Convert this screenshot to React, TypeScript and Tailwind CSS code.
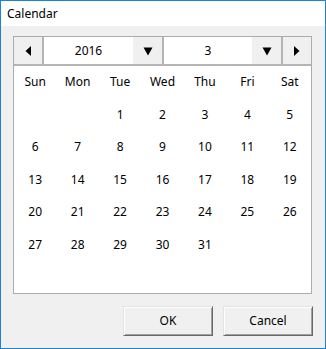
const rows: (number | null)[][] = [
  [null, null, 1, 2, 3, 4, 5],
  [6, 7, 8, 9, 10, 11, 12],
  [13, 14, 15, 16, 17, 18, 19],
  [20, 21, 22, 23, 24, 25, 26],
  [27, 28, 29, 30, 31, null, null],
]

const dayNames = ["Sun", "Mon", "Tue", "Wed", "Thu", "Fri", "Sat"]

const DownArrow = () => (
  <svg width="10" height="10" viewBox="0 0 10 10">
    <path d="M0.5 1.5 H9.5 L5 9.5 Z" fill="#000" />
  </svg>
)

const SideArrow = ({ dir }: { dir: "left" | "right" }) => (
  <svg width="6" height="10" viewBox="0 0 6 10">
    {dir === "left" ? (
      <path d="M6 0 V10 L0.5 5 Z" fill="#000" />
    ) : (
      <path d="M0 0 V10 L5.5 5 Z" fill="#000" />
    )}
  </svg>
)

const Sep = () => <div className="w-[2px] bg-[#b4b4b4]" />

const DialogButton = ({ label }: { label: string }) => (
  <button className="flex h-[30px] w-[90px] items-center justify-center border border-t-[#e3e3e3] border-l-[#e3e3e3] border-r-[#696969] border-b-[#696969] bg-[#f0f0f0] text-[12px] text-black shadow-[inset_1px_1px_0_#ffffff,inset_-1px_-1px_0_#a0a0a0]">
    {label}
  </button>
)

export default function App() {
  return (
    <div
      className="flex h-[349px] w-[326px] flex-col border border-[#1883d7] bg-[#f0f0f0] text-black"
      style={{ fontFamily: '"Noto Sans", "Open Sans", sans-serif' }}
    >
      <div className="flex h-[25px] items-center bg-white pl-[6px] text-[12px]">
        Calendar
      </div>
      <div className="flex flex-1 flex-col pl-[12px] pr-[12px] pt-[10px]">
        <div className="flex h-[258px] w-[299px] flex-col border border-[#acacac] bg-white">
          <div className="flex h-[27px] bg-[#f0f0f0] text-[12px]">
            <div className="flex w-[28px] items-center justify-center">
              <SideArrow dir="left" />
            </div>
            <Sep />
            <div className="flex w-[89px] items-center justify-center bg-white">2016</div>
            <div className="flex w-[29px] items-center justify-center">
              <DownArrow />
            </div>
            <Sep />
            <div className="flex w-[88px] items-center justify-center bg-white">3</div>
            <div className="flex w-[29px] items-center justify-center">
              <DownArrow />
            </div>
            <Sep />
            <div className="flex w-[28px] items-center justify-center">
              <SideArrow dir="right" />
            </div>
          </div>
          <div className="h-[2px] bg-[#b4b4b4]" />
          <div className="grid grid-cols-7 text-[12px]">
            {dayNames.map((d) => (
              <div key={d} className="flex h-[32.5px] items-center justify-center">
                {d}
              </div>
            ))}
            {rows.flat().map((n, i) => (
              <div key={i} className="flex h-[32.5px] items-center justify-center">
                {n ?? ""}
              </div>
            ))}
          </div>
        </div>
        <div className="mt-[12px] flex justify-end gap-[10px] pr-[0px]">
          <DialogButton label="OK" />
          <DialogButton label="Cancel" />
        </div>
      </div>
    </div>
  )
}
